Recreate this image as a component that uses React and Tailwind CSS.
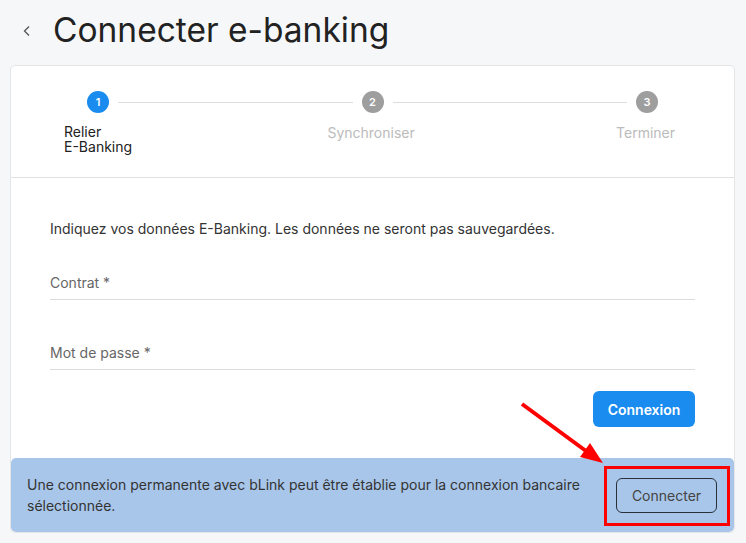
import React from "react";

export default function App() {
  return (
    <div
      className="relative w-[746px] h-[543px] bg-[#f6f7f8] overflow-hidden"
      style={{ fontFamily: "Inter, 'Noto Sans', sans-serif" }}
    >
      {/* Header */}
      <div className="flex items-center h-[65px] pl-[20px] pb-[4px]">
        <svg width="14" height="14" viewBox="0 0 14 14" className="mr-[19px]">
          <path d="M9 2.5 L4.5 7 L9 11.5" fill="none" stroke="#555" strokeWidth="1.3" />
        </svg>
        <h1 className="text-[33.5px] leading-none text-[#222]">Connecter e-banking</h1>
      </div>

      {/* Card */}
      <div className="ml-[10px] mr-[11px] h-[468px] bg-white border border-[#e4e5e6] rounded-[5px] flex flex-col overflow-hidden">
        {/* Stepper */}
        <div className="h-[112px] border-b border-[#e2e2e2] pl-[53px] pr-[59px] pt-[25px]">
          <div className="flex items-center ml-[23px] mr-[17px] gap-[9px]">
            <div className="w-[22px] h-[22px] rounded-full bg-[#1a8cf0] text-white text-[11px] font-semibold flex items-center justify-center">1</div>
            <div className="flex-1 h-px bg-[#dedede]" />
            <div className="w-[22px] h-[22px] rounded-full bg-[#9e9e9e] text-white text-[11px] font-semibold flex items-center justify-center">2</div>
            <div className="flex-1 h-px bg-[#dedede]" />
            <div className="w-[22px] h-[22px] rounded-full bg-[#9e9e9e] text-white text-[11px] font-semibold flex items-center justify-center">3</div>
          </div>
          <div className="flex justify-between items-start mt-[11px] text-[14px] leading-[15px]">
            <div className="text-[#222]">
              Relier
              <br />
              E-Banking
            </div>
            <div className="text-[#bbbbbb] pt-[1px] -translate-x-[3px]">Synchroniser</div>
            <div className="text-[#bbbbbb] pt-[1px]">Terminer</div>
          </div>
        </div>

        {/* Body */}
        <div className="flex-1 px-[39px] pt-[42px]">
          <p className="text-[14px] leading-[18px] text-[#333]">
            Indiquez vos données E-Banking. Les données ne seront pas sauvegardées.
          </p>
          <div className="mt-[36px] border-b border-[#dcdcdc] pb-[7px] text-[14px] leading-[18px] text-[#666]">
            Contrat *
          </div>
          <div className="mt-[44px] border-b border-[#dcdcdc] pb-[7px] text-[14px] leading-[18px] text-[#666]">
            Mot de passe *
          </div>
          <div className="flex justify-end mt-[21px]">
            <button className="w-[102px] h-[36px] rounded-[6px] bg-[#1a8cf0] text-white text-[14px] font-semibold">
              Connexion
            </button>
          </div>
        </div>

        {/* Banner */}
        <div className="h-[74px] bg-[#a8c6ea] rounded-[5px] flex items-center pl-[16px] pr-[17px]">
          <p className="flex-1 text-[14px] leading-[21px] text-[#333] pr-[20px]">
            Une connexion permanente avec bLink peut être établie pour la connexion bancaire sélectionnée.
          </p>
          <div className="relative">
            <button className="w-[101px] h-[35px] rounded-[6px] border border-[#2a2f3a] text-[14px] text-[#444]">
              Connecter
            </button>
            <div className="absolute left-[-12px] top-[-12px] w-[126px] h-[60px] border-[3px] border-[#ff0000]" />
          </div>
        </div>
      </div>

      {/* Red arrow annotation */}
      <svg className="absolute left-0 top-0 pointer-events-none" width="746" height="543">
        <line x1="522" y1="404" x2="586" y2="451" stroke="#ff0000" strokeWidth="4" />
        <polygon points="603,463 580,457 590,443" fill="#ff0000" />
      </svg>
    </div>
  );
}
